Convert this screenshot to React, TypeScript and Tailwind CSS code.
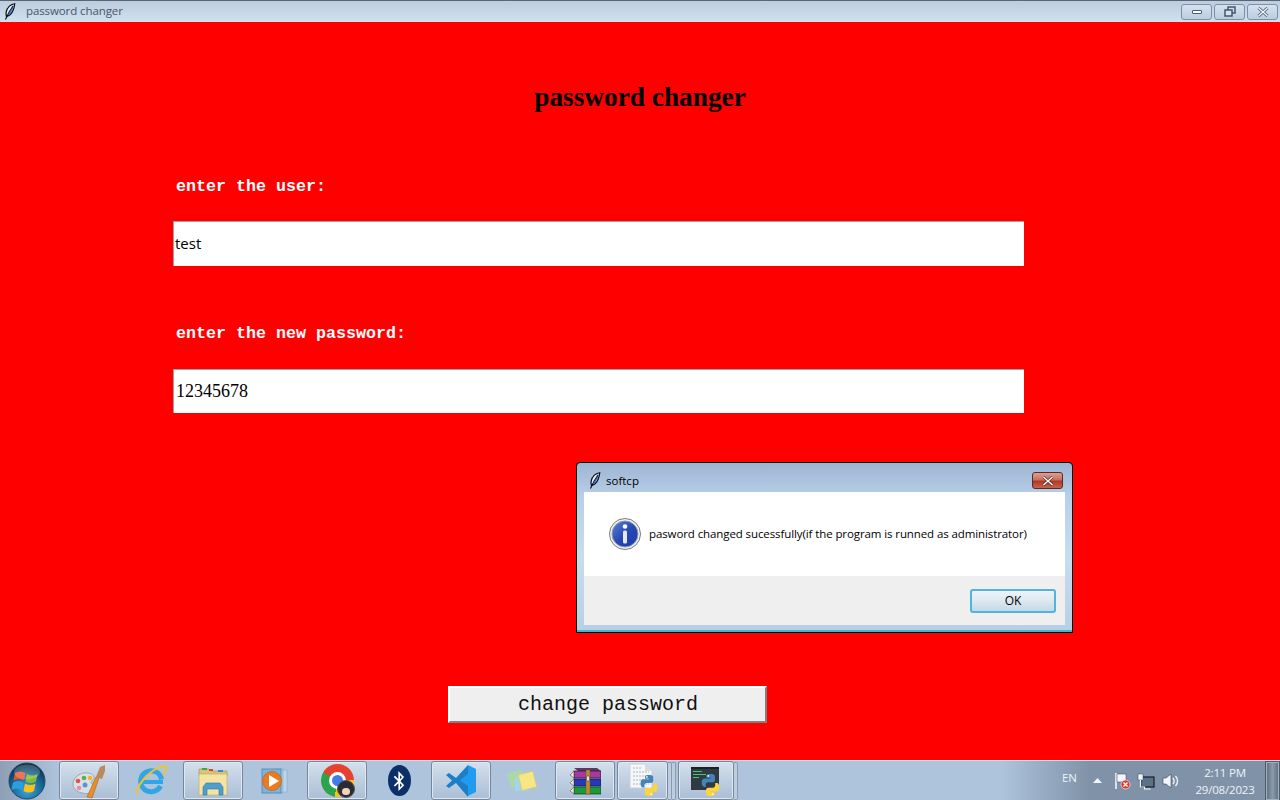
import { FaBluetoothB } from 'react-icons/fa';

const ui = "font-['Open_Sans','Noto_Sans',sans-serif]";

function Feather({ className }: { className?: string }) {
  return (
    <svg viewBox="0 0 12 18" className={className}>
      <path d="M11 .8C7 1 3 4.500 2 9.500c-.4 2-.2 3.500.2 4.700 3.300-.6 6-3.500 7.300-7C10.300 5 10.800 2.800 11 .8z" fill="#e6eef8" stroke="#0b0f1a" strokeWidth="1.300" />
      <path d="M9.300 3C6.800 6.500 4 11 1.200 17.500" fill="none" stroke="#0b0f1a" strokeWidth="1.200" />
      <path d="M8.800 5.500c-1.500 2.200-2.800 4.500-4 7" fill="none" stroke="#2f6fd0" strokeWidth="1.500" />
    </svg>
  );
}

function CaptionBtn({ children }: { children: React.ReactNode }) {
  return (
    <div className="h-[16px] w-[31px] flex items-center justify-center rounded-[3px] border border-[#7f90a6] bg-[linear-gradient(#d5e1ee,#bccde0)]">
      {children}
    </div>
  );
}

function TitleBar() {
  return (
    <div className="h-[22px] shrink-0 flex items-center border-t border-[#5d6670] bg-[linear-gradient(#bccde0,#d2e0ee)] pr-[2px]">
      <Feather className="w-[12px] h-[17px] ml-[4px]" />
      <span className={`${ui} ml-[10px] mb-[1px] text-[11.500px] tracking-[-0.1px] text-[#47556a]`}>password changer</span>
      <div className="ml-auto flex gap-[2px]">
        <CaptionBtn>
          <div className="w-[10px] h-[4px] rounded-[1px] border border-[#4a5a70] bg-white" />
        </CaptionBtn>
        <CaptionBtn>
          <svg viewBox="0 0 12 11" className="w-[12px] h-[11px]">
            <rect x="4" y="1" width="7" height="6" fill="none" stroke="#46566c" strokeWidth="1.500" />
            <rect x="1" y="4" width="7" height="6" fill="#d5e1ee" stroke="#46566c" strokeWidth="1.500" />
          </svg>
        </CaptionBtn>
        <CaptionBtn>
          <svg viewBox="0 0 12 10" className="w-[12px] h-[10px]">
            <path d="M1.500 1l9 8M10.500 1l-9 8" stroke="#4a5a70" strokeWidth="3" />
            <path d="M1.500 1l9 8M10.500 1l-9 8" stroke="#f4f7fa" strokeWidth="1.400" />
          </svg>
        </CaptionBtn>
      </div>
    </div>
  );
}

function Form() {
  return (
    <main className="flex-1 bg-[#ff0000] flex flex-col">
      <h1 className="mt-[60px] h-[30px] text-center font-['Liberation_Serif',serif] font-bold text-[27.300px] leading-[30px] text-black">
        password changer
      </h1>
      <label className="mt-[65px] ml-[176px] h-[20px] font-['Liberation_Mono',monospace] font-bold text-[16.670px] leading-[20px] text-white">
        enter the user:
      </label>
      <input
        readOnly
        value="test"
        className={`${ui} mt-[24px] ml-[173px] w-[851px] h-[45px] shrink-0 bg-white pl-[1px] pb-[2px] text-[15px] text-black border-l border-t border-[#a0a0a0] outline-none`}
      />
      <label className="mt-[58px] ml-[176px] h-[20px] font-['Liberation_Mono',monospace] font-bold text-[16.670px] leading-[20px] text-white">
        enter the new password:
      </label>
      <input
        readOnly
        value="12345678"
        className="mt-[25px] ml-[173px] w-[851px] h-[44px] shrink-0 bg-white pl-[2px] font-['Liberation_Serif',serif] text-[18px] text-black border-l border-t border-[#a0a0a0] outline-none"
      />
      <button className="mt-[273px] ml-[448px] w-[319px] h-[37px] shrink-0 pl-[1px] bg-[#efefef] border-2 border-t-white border-l-white border-r-[#808080] border-b-[#808080] font-['Liberation_Mono',monospace] text-[20px] text-[#111]">
        change password
      </button>
    </main>
  );
}

function InfoIcon() {
  return (
    <svg viewBox="0 0 32 32" className="w-[32px] h-[32px] shrink-0">
      <defs>
        <linearGradient id="infoBlue" x1="0" y1="0" x2="1" y2="1">
          <stop offset="0" stopColor="#5e83d8" />
          <stop offset="0.5" stopColor="#2749b4" />
          <stop offset="1" stopColor="#1c3aa6" />
        </linearGradient>
      </defs>
      <circle cx="16" cy="16" r="15.500" fill="#f1f1f1" stroke="#7c7c7c" />
      <circle cx="16" cy="16" r="13" fill="url(#infoBlue)" stroke="#8b97b5" />
      <circle cx="16" cy="8.500" r="2.300" fill="#fff" />
      <rect x="14" y="12.500" width="4" height="13" rx="1.500" fill="#e4e8f2" />
    </svg>
  );
}

function Dialog() {
  return (
    <div className="absolute left-[576px] top-[462px] w-[497px] h-[171px] flex flex-col rounded-t-[4px] border border-black bg-[linear-gradient(#9db5d2,#b7cfe8_20%,#c9dcef_55%,#b7cfe6)] shadow-[inset_0_-2px_0_#3fb6d9]">
      <div className="h-[29px] shrink-0 flex items-center pt-[6px] pl-[12px] pr-[9px]">
        <Feather className="w-[12px] h-[17px]" />
        <span className={`${ui} ml-[5px] text-[11.500px] text-black`}>softcp</span>
        <div className="ml-auto w-[31px] h-[17px] flex items-center justify-center rounded-[3px] border border-[#5c2a25] bg-[linear-gradient(#dc9f92,#c9705f_45%,#ae3a26_55%,#c9624d)]">
          <svg viewBox="0 0 12 10" className="w-[12px] h-[10px]">
            <path d="M1.500 1l9 8M10.500 1l-9 8" stroke="#5a2a26" strokeWidth="3" />
            <path d="M1.500 1l9 8M10.500 1l-9 8" stroke="#ffffff" strokeWidth="1.500" />
          </svg>
        </div>
      </div>
      <div className="mx-[7px] h-[84px] shrink-0 bg-white flex items-center pl-[25px]">
        <InfoIcon />
        <span className={`${ui} ml-[8px] text-[11.500px] tracking-[-0.1px] text-black whitespace-nowrap`}>
          pasword changed sucessfully(if the program is runned as administrator)
        </span>
      </div>
      <div className="mx-[7px] h-[49px] shrink-0 bg-[#efefef] flex items-start justify-end pt-[13px] pr-[9px]">
        <button className={`${ui} w-[86px] h-[24px] rounded-[3px] border-2 border-[#4fb4de] bg-[linear-gradient(#eef4f8,#dce8f0_50%,#c3d8e6)] text-[12px] text-black`}>
          OK
        </button>
      </div>
    </div>
  );
}

function Python({ className }: { className?: string }) {
  const half = 'M11.900 2C8 2 8.200 3.700 8.200 3.700v1.800h3.800V6H6.600S4 5.700 4 9.800s2.300 4 2.300 4h1.400v-1.900s-.1-2.300 2.200-2.300h3.900s2.200 0 2.200-2.100V4.100S16.300 2 11.900 2z';
  return (
    <svg viewBox="4 2 16 20" className={className}>
      <path d={half} fill="#4584b8" />
      <path d={half} fill="#ffd43b" transform="rotate(180 12 12)" />
      <circle cx="10" cy="3.800" r=".8" fill="#fff" />
      <circle cx="14" cy="20.200" r=".8" fill="#fff" />
    </svg>
  );
}

function Paint() {
  return (
    <svg viewBox="0 0 34 36" className="w-[34px] h-[36px]">
      <path d="M1 21c0-7 8-12 15-11 4 .5 6 2.500 6 5 0 2-3 2.500-3 4.500s5 2 3.500 6c-1.500 4.500-7 6-12 4.500C5 29 1 26 1 21z" fill="#d9e0e6" stroke="#8e9aa6" strokeWidth=".8" />
      <circle cx="6" cy="18" r="2.300" fill="#e2534a" />
      <circle cx="12" cy="15" r="2.300" fill="#5db04b" />
      <circle cx="18" cy="15" r="2.200" fill="#f0b429" />
      <circle cx="7" cy="25" r="2.300" fill="#e88bb0" />
      <circle cx="13" cy="22" r="2.500" fill="#5b93d9" />
      <path d="M15 34L24 14l3 1-7 20z" fill="#e5902a" stroke="#a85f16" strokeWidth=".6" />
      <path d="M24 14l4-10 5-2 0 6-3 8z" fill="#b98a5b" />
    </svg>
  );
}

function IE() {
  return (
    <svg viewBox="0 0 32 32" className="w-[32px] h-[32px]">
      <path d="M25.500 21a10.500 10.500 0 1 1 1-6.500" fill="none" stroke="#32a5e6" strokeWidth="5" />
      <rect x="6" y="15" width="22" height="4" fill="#32a5e6" />
      <path d="M3 29c-3-3 3-14 12-21C21 3 29 0 31 2c1.500 1.500-.5 5-3 8" fill="none" stroke="#f0c329" strokeWidth="2" />
    </svg>
  );
}

function Folder() {
  return (
    <svg viewBox="0 0 32 30" className="w-[32px] h-[30px]">
      <path d="M2 3h10l2 2h16v5H2z" fill="#d8c47a" stroke="#a48d45" strokeWidth=".6" />
      <rect x="5" y="2" width="5" height="2" fill="#46a346" />
      <rect x="12" y="3" width="4" height="2" fill="#d8473f" />
      <rect x="21" y="4" width="5" height="2" fill="#3a85d0" />
      <path d="M2 8h28v21H2z" fill="#f5e3a1" stroke="#c4a95c" strokeWidth=".6" />
      <path d="M6 29v-8l3-4h14l3 4v8h-4v-6H10v6z" fill="#4e9fd0" stroke="#2a7aa8" strokeWidth=".6" />
    </svg>
  );
}

function MediaPlayer() {
  return (
    <svg viewBox="0 0 28 26" className="w-[28px] h-[26px]">
      <rect x="19" y="2" width="7" height="22" fill="#bcd7ea" stroke="#7fa8c4" strokeWidth=".6" />
      <rect x="15" y="1" width="7" height="24" fill="#a9cde6" stroke="#7fa8c4" strokeWidth=".6" />
      <rect x="1" y="1" width="19" height="24" fill="#7ab3dc" stroke="#4d86b2" strokeWidth=".8" />
      <circle cx="11" cy="13" r="9.500" fill="#ec7a1f" stroke="#c25a10" strokeWidth=".6" />
      <path d="M8 7l10 6-10 6z" fill="#fff" />
    </svg>
  );
}

function Chrome() {
  return (
    <div className="relative w-[33px] h-[33px]">
      <div className="w-[33px] h-[33px] rounded-full bg-[conic-gradient(#e6402f_0deg_90deg,#f9c21a_90deg_190deg,#2ea24c_190deg_300deg,#e6402f_300deg)] flex items-center justify-center">
        <div className="w-[17px] h-[17px] rounded-full bg-[#3f7de8] border-[3px] border-white" />
      </div>
      <div className="absolute right-[-1px] bottom-[-1px] w-[18px] h-[18px] rounded-full bg-[#2b2b33] border border-[#555]">
        <div className="absolute left-[4px] top-[7px] w-[8px] h-[7px] rounded-full bg-[#f2d4bd]" />
      </div>
    </div>
  );
}

function Bluetooth() {
  return (
    <div className="w-[23px] h-[31px] rounded-[50%] bg-[#0b2f66] flex items-center justify-center">
      <FaBluetoothB className="text-white w-[16px] h-[20px]" />
    </div>
  );
}

function VsCode() {
  return (
    <svg viewBox="0 0 32 33" className="w-[32px] h-[33px]">
      <path d="M23 1L11 14 4 9 1 11l6 5.500-6 5.500 3 2 7-5 12 14z" fill="#1a7fc8" />
      <path d="M23 1l8 4v23l-8 4V22l-8-5.500 8-6.500z" fill="#1f9cf0" />
    </svg>
  );
}

function Notes() {
  return (
    <svg viewBox="0 0 32 24" className="w-[32px] h-[24px]">
      <rect x="2" y="2" width="15" height="15" fill="#a8dca0" opacity=".85" transform="rotate(-18 10 10)" />
      <rect x="8" y="8" width="13" height="14" fill="#a5d4ef" opacity=".9" />
      <rect x="13" y="4" width="15" height="16" fill="#f7e684" stroke="#d9c658" strokeWidth=".5" transform="rotate(-14 20 12)" />
    </svg>
  );
}

function WinRar() {
  return (
    <svg viewBox="0 0 32 28" className="w-[32px] h-[28px]">
      <path d="M5 1h23l4 3H9z" fill="#5e3a60" />
      <rect x="5" y="4" width="27" height="7" fill="#a53aa0" stroke="#2a102a" strokeWidth=".7" />
      <rect x="5" y="12" width="27" height="7" fill="#2638b8" stroke="#0c1240" strokeWidth=".7" />
      <rect x="5" y="20" width="27" height="7" fill="#1c9a3a" stroke="#0a3a14" strokeWidth=".7" />
      <path d="M1 8l4-4v7zM1 16l4-4v7zM1 24l4-4v7z" fill="#e9e4d4" stroke="#444" strokeWidth=".5" />
      <rect x="17" y="3" width="4" height="24" fill="#b98a3a" stroke="#6a4a16" strokeWidth=".4" />
      <rect x="17.500" y="9" width="3" height="5" rx="1" fill="#e8e4d8" stroke="#333" strokeWidth=".5" />
    </svg>
  );
}

function PyFile() {
  return (
    <div className="relative w-[32px] h-[32px]">
      <svg viewBox="0 0 24 26" className="absolute left-[2px] top-[-2px] w-[24px] h-[26px]">
        <path d="M1 1h15l7 7v17H1z" fill="#f4f6f8" stroke="#c5ccd4" strokeWidth=".8" />
        <path d="M16 1v7h7z" fill="#d8dde3" />
        <path d="M4 5h9M4 9h16M4 13h16M4 17h16M4 21h16" stroke="#b0b8c0" strokeWidth="1.200" strokeDasharray="2 1" />
      </svg>
      <Python className="absolute right-0 bottom-[1px] w-[20px] h-[21px]" />
    </div>
  );
}

function PyIdle() {
  return (
    <div className="relative w-[32px] h-[32px]">
      <div className="ml-[1px] mt-[2px] w-[28px] h-[23px] bg-[#2f3a42] border-t-2 border-[#1a2024] flex flex-col gap-[2px] pt-[2px] pl-[2px]">
        <div className="w-[9px] h-[1px] bg-[#49c56b]" />
        <div className="w-[13px] h-[1px] bg-[#49c56b]" />
        <div className="w-[6px] h-[1px] bg-[#49c56b]" />
      </div>
      <Python className="absolute right-[1px] bottom-[1px] w-[21px] h-[22px]" />
    </div>
  );
}

function TaskBtn({ children, w, framed }: { children: React.ReactNode; w: string; framed?: boolean }) {
  return (
    <div className={`${w} h-[39px] shrink-0 flex items-center justify-center rounded-[3px] ${framed ? 'border border-[#76879b] bg-[linear-gradient(#d4e0ec,#aabed5)] shadow-[inset_0_0_0_1px_#dfe8f1]' : ''}`}>
      {children}
    </div>
  );
}

function Taskbar() {
  return (
    <footer className={`${ui} h-[40px] shrink-0 flex items-center border-t border-[#dbe5ef] bg-[linear-gradient(90deg,#8d9fb5_0,#aec4dd_60px,#aec4dd_1000px,#7f92a8_1090px,#7f92a8_100%)]`}>
      <div className="w-[54px] shrink-0 flex justify-center">
        <svg viewBox="0 0 38 38" className="w-[38px] h-[38px]">
          <defs>
            <radialGradient id="orb" cx="0.5" cy="0.75" r="0.75">
              <stop offset="0" stopColor="#3fa8df" />
              <stop offset="0.6" stopColor="#12628f" />
              <stop offset="1" stopColor="#06273f" />
            </radialGradient>
          </defs>
          <circle cx="19" cy="19" r="18" fill="url(#orb)" stroke="#2a4a62" />
          <path d="M7 11c3.500-2 7-2 10.500 0L16 18.500c-3.500-2-7-2-10.500 0z" fill="#e6532c" />
          <path d="M19 12c3.500 2 7 2 10.500 0L28 19.500c-3.500 2-7 2-10.500 0z" fill="#83bb2d" />
          <path d="M5 20.500c3.500-2 7-2 10.500 0L14 28c-3.500-2-7-2-10.500 0z" fill="#2b9fe0" />
          <path d="M17 21.500c3.500 2 7 2 10.500 0L26 29c-3.500 2-7 2-10.500 0z" fill="#f8c11e" />
          <ellipse cx="19" cy="10" rx="13" ry="7.500" fill="#ffffff" opacity=".2" />
        </svg>
      </div>
      <div className="flex items-center gap-[2px] ml-[5px]">
        <TaskBtn w="w-[60px]" framed><Paint /></TaskBtn>
        <TaskBtn w="w-[60px]"><IE /></TaskBtn>
        <TaskBtn w="w-[60px]" framed><Folder /></TaskBtn>
        <TaskBtn w="w-[60px]"><MediaPlayer /></TaskBtn>
        <TaskBtn w="w-[60px]" framed><Chrome /></TaskBtn>
        <TaskBtn w="w-[60px]"><Bluetooth /></TaskBtn>
        <TaskBtn w="w-[60px]" framed><VsCode /></TaskBtn>
        <TaskBtn w="w-[60px]"><Notes /></TaskBtn>
        <TaskBtn w="w-[60px]" framed><WinRar /></TaskBtn>
        <TaskBtn w="w-[51px]" framed><PyFile /></TaskBtn>
        <div className="ml-[-2px] w-[4px] h-[38px] rounded-r-[2px] border border-l-0 border-[#8a9bb0] bg-[#bccde0]" />
        <div className="ml-[-2px] w-[4px] h-[38px] rounded-r-[2px] border border-l-0 border-[#8a9bb0] bg-[#bccde0]" />
        <TaskBtn w="w-[56px]" framed><PyIdle /></TaskBtn>
        <div className="ml-[-2px] w-[4px] h-[38px] rounded-r-[2px] border border-l-0 border-[#8a9bb0] bg-[#bccde0]" />
      </div>
      <div className="ml-auto flex items-center text-[#eef3f8]">
        <span className="text-[11.500px] mr-[16px] mb-[6px]">EN</span>
        <svg viewBox="0 0 9 5" className="w-[9px] h-[5px] mr-[11px]"><path d="M4.500 0L9 5H0z" fill="#f2f5f9" /></svg>
        <svg viewBox="0 0 18 18" className="w-[18px] h-[18px] mr-[6px]">
          <path d="M3 1v16" stroke="#f2f5f9" strokeWidth="1.600" />
          <path d="M4 2h9v8H4z" fill="#f2f5f9" stroke="#39434f" strokeWidth=".5" />
          <circle cx="12.500" cy="12.500" r="4.500" fill="#d83a35" stroke="#fff" strokeWidth=".6" />
          <path d="M10.500 10.500l4 4M14.500 10.500l-4 4" stroke="#fff" strokeWidth="1.300" />
        </svg>
        <svg viewBox="0 0 18 18" className="w-[18px] h-[18px] mr-[6px]">
          <rect x="4" y="5" width="13" height="10" fill="#5d7186" stroke="#17212b" strokeWidth="1.200" />
          <path d="M1 2h5v6H1z" fill="#f2f5f9" stroke="#39434f" strokeWidth=".5" />
          <path d="M3.500 8v7h4v2h6" fill="none" stroke="#f2f5f9" strokeWidth="1.200" />
        </svg>
        <svg viewBox="0 0 18 18" className="w-[18px] h-[18px] mr-[11px]">
          <path d="M2 6h3l5-4v14l-5-4H2z" fill="#f2f5f9" stroke="#39434f" strokeWidth=".6" />
          <path d="M12 6c1.500 2 1.500 4 0 6M14.500 4c2.500 3 2.500 7 0 10" fill="none" stroke="#f2f5f9" strokeWidth="1.300" />
        </svg>
        <div className="w-[70px] flex flex-col items-center text-[11.500px] leading-[17px] tracking-[-0.2px]">
          <span>2:11 PM</span>
          <span>29/08/2023</span>
        </div>
        <div className="ml-[5px] w-[15px] h-[40px] border border-[#4c5a6a] bg-[linear-gradient(90deg,#5d6d7e,#8a9aab,#5d6d7e)] shadow-[inset_0_0_0_1px_#9fb0c0]" />
      </div>
    </footer>
  );
}

export default function App() {
  return (
    <div className="relative w-[1280px] h-[800px] flex flex-col overflow-hidden">
      <TitleBar />
      <Form />
      <Taskbar />
      <Dialog />
    </div>
  );
}
